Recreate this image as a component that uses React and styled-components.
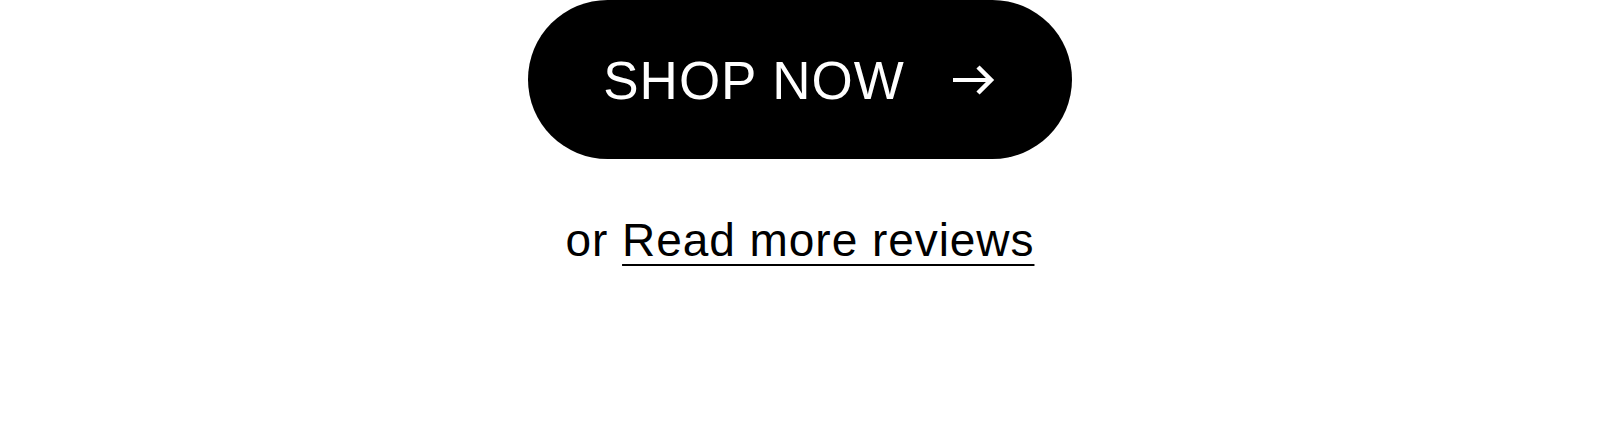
import React from "react";
import styled, { createGlobalStyle } from "styled-components";

const GlobalStyle = createGlobalStyle`
  html, body {
    margin: 0;
    padding: 0;
    background: #ffffff;
  }
  body {
    font-family: "Liberation Sans", Arial, sans-serif;
    color: #000000;
  }
`;

const Container = styled.div`
  width: 1600px;
  height: 432px;
  display: flex;
  flex-direction: column;
  align-items: center;
`;

const ShopButton = styled.a`
  display: flex;
  align-items: center;
  gap: 48px;
  height: 159px;
  padding: 0 77px 0 75px;
  box-sizing: border-box;
  border-radius: 80px;
  background: #000000;
  color: #ffffff;
  text-decoration: none;
  cursor: pointer;
`;

const ButtonLabel = styled.span`
  font-size: 53px;
  font-weight: 400;
  letter-spacing: 1px;
  line-height: 1;
  text-transform: uppercase;
  padding-top: 1px;
`;

const Arrow = styled.svg`
  width: 42px;
  height: 30px;
  display: block;
`;

const ReviewLine = styled.p`
  margin: 0;
  margin-top: 53px;
  font-size: 46px;
  line-height: 56px;
  letter-spacing: 0.95px;
`;

const ReviewLink = styled.a`
  color: #000000;
  text-decoration: underline;
  text-decoration-thickness: 2px;
  text-underline-offset: 8px;
  cursor: pointer;
`;

const ArrowIcon = () => (
  <Arrow viewBox="0 0 42 30" fill="none">
    <path d="M0 15H38" stroke="#fff" strokeWidth="4" />
    <path d="M25 2L38 15L25 28" stroke="#fff" strokeWidth="4.5" />
  </Arrow>
);

const App = () => {
  return (
    <Container>
      <GlobalStyle />
      <ShopButton>
        <ButtonLabel>Shop now</ButtonLabel>
        <ArrowIcon />
      </ShopButton>
      <ReviewLine>
        or <ReviewLink>Read more reviews</ReviewLink>
      </ReviewLine>
    </Container>
  );
};

export default App;
